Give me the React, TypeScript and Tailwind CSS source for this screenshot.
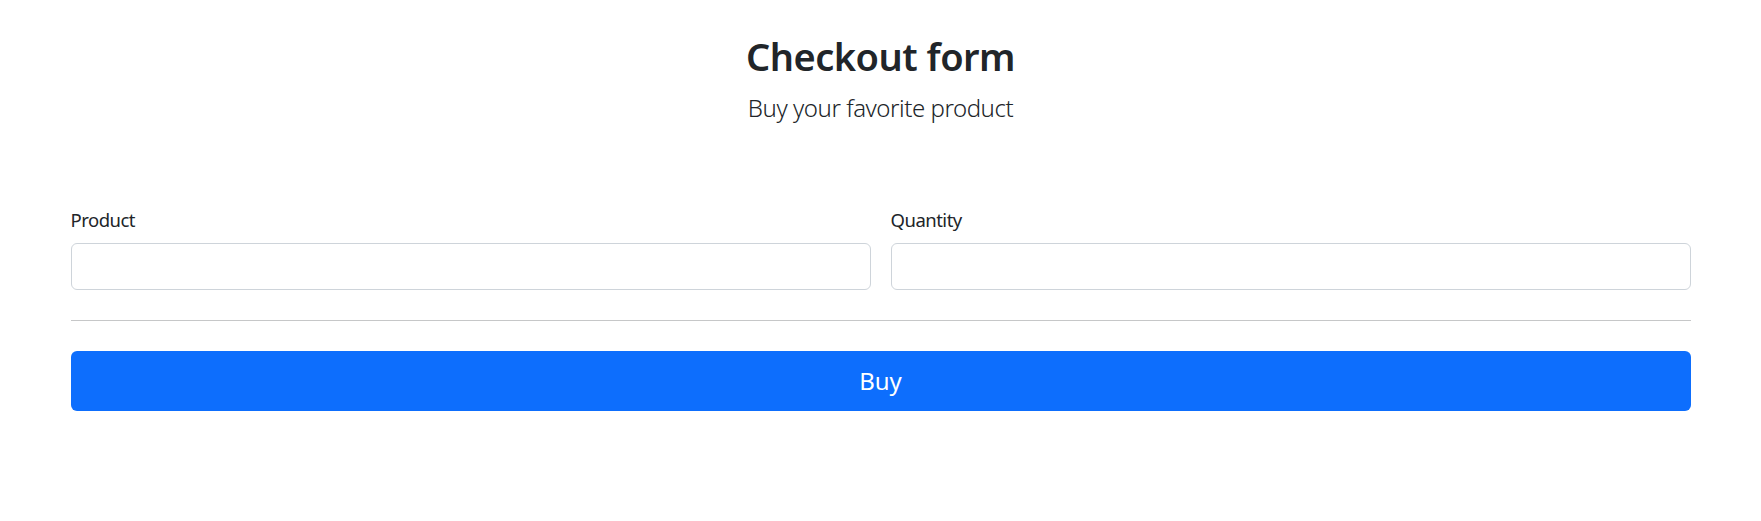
export default function App() {
  return (
    <div
      className="min-h-screen bg-white text-[#212529]"
      style={{ fontFamily: '"Noto Sans", "Open Sans", sans-serif' }}
    >
      <div className="mx-auto w-[1620px]">
        {/* Header */}
        <div className="pt-[32px] text-center">
          <h2 className="text-[38px] font-semibold leading-[48px] tracking-[-0.5px]">Checkout form</h2>
          <p className="mt-[10px] text-[24px] font-light leading-[36px] tracking-[-0.45px]">
            Buy your favorite product
          </p>
        </div>

        {/* Form */}
        <form className="mt-[79px]" onSubmit={(e) => e.preventDefault()}>
          <div className="grid grid-cols-2 gap-x-5">
            <div>
              <label
                htmlFor="product"
                className="mb-[8px] block text-[18.5px] leading-[30px] tracking-[-0.5px]"
              >
                Product
              </label>
              <input
                id="product"
                type="text"
                className="block h-[47px] w-full rounded-[6px] border border-[#ced4da] bg-white px-4 text-[20px] outline-none"
              />
            </div>
            <div>
              <label
                htmlFor="quantity"
                className="mb-[8px] block text-[18.5px] leading-[30px] tracking-[-0.5px]"
              >
                Quantity
              </label>
              <input
                id="quantity"
                type="text"
                className="block h-[47px] w-full rounded-[6px] border border-[#ced4da] bg-white px-4 text-[20px] outline-none"
              />
            </div>
          </div>

          <hr className="mt-[30px] border-0 border-t border-[#c6c7c8]" />

          <button
            type="submit"
            className="mt-[30px] flex h-[60px] w-full items-center justify-center rounded-[6px] bg-[#0d6efd] text-[24px] text-white"
          >
            Buy
          </button>
        </form>
      </div>
    </div>
  );
}
